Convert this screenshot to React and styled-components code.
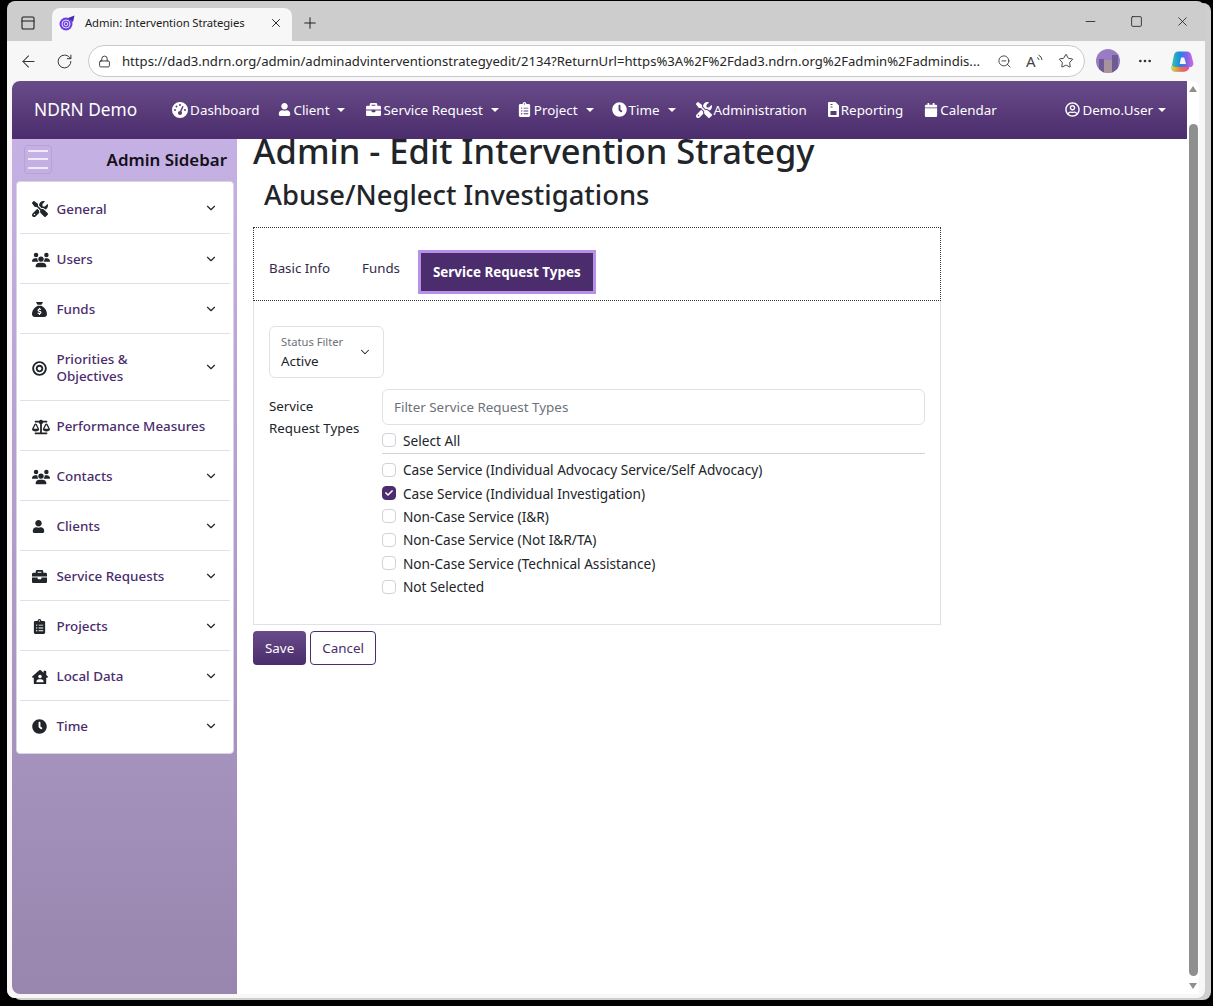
import React from 'react';
import styled, { createGlobalStyle } from 'styled-components';
import { ArrowLeft, RotateCw, Lock, ZoomOut, Star, MoreHorizontal, X, Plus, Minus, Square, ChevronDown, PanelTop } from 'lucide-react';
import { FaBullseye, FaBalanceScale, FaUser, FaBriefcase, FaClipboardList, FaHouseUser, FaClock, FaCalendar, FaRegUserCircle, FaCheck } from 'react-icons/fa';
import { FaSackDollar, FaUsers, FaScrewdriverWrench, FaGaugeHigh } from 'react-icons/fa6';

const Global = createGlobalStyle`
  html, body { margin: 0; height: 100%; background: #000; overflow: hidden; }
  * { box-sizing: border-box; }
  body { font-family: "Noto Sans", "Open Sans", sans-serif; color: #212529; }
`;

const Screen = styled.div`
  width: 1213px;
  height: 1006px;
  padding: 1px 8px 8px 7px;
`;

const Window = styled.div`
  height: 100%;
  background: #cdcdcd;
  border-radius: 8px;
  display: flex;
  flex-direction: column;
  box-shadow: 6px 2px 0 #cfcfcf;
`;

const TabStrip = styled.div`
  height: 40px;
  display: flex;
  align-items: flex-end;
  padding-left: 13px;
  color: #1c1c1c;
`;

const StripButton = styled.div`
  width: 19px;
  height: 33px;
  display: flex;
  align-items: center;
  margin-right: 13px;
  padding-bottom: 4px;
`;

const Tab = styled.div`
  width: 240px;
  height: 33px;
  background: #f7f7f7;
  border-radius: 8px 8px 0 0;
  display: flex;
  align-items: center;
  padding: 0 0 4px 7px;
  font-size: 11.3px;
  letter-spacing: -0.1px;
  gap: 10px;
  svg { flex: none; }
`;

const TabTitle = styled.span`
  flex: 1;
  white-space: nowrap;
`;

const TabClose = styled.span`
  display: flex;
  margin-right: 9px;
`;

const NewTab = styled.div`
  display: flex;
  height: 33px;
  align-items: center;
  margin-left: 9px;
  padding-bottom: 4px;
`;

const WindowControls = styled.div`
  margin-left: auto;
  height: 40px;
  display: flex;
  align-items: center;
  gap: 32px;
  padding: 0 15px 0 0;
`;

const Toolbar = styled.div`
  height: 40px;
  background: #f7f7f7;
  display: flex;
  align-items: center;
  padding-left: 12px;
  color: #333;
`;

const ToolIcon = styled.span`
  display: flex;
  margin-right: ${p => p.$gap || 0}px;
`;

const AddressBar = styled.div`
  width: 997px;
  height: 32px;
  border: 1px solid #c9c9c9;
  background: #fff;
  border-radius: 16px;
  display: flex;
  align-items: center;
  padding: 0 10px 0 9px;
  font-size: 13.13px;
  color: #262626;
`;

const Url = styled.span`
  flex: 1;
  margin-left: 11px;
  white-space: nowrap;
  overflow: hidden;
`;

const AddressIcons = styled.div`
  display: flex;
  align-items: center;
  gap: 14px;
`;

const ReadAloud = styled.span`
  width: 18px;
  display: flex;
  align-items: flex-start;
  font-size: 15px;
  line-height: 1;
  color: #444;
`;

const ToolbarRight = styled.div`
  display: flex;
  align-items: center;
  margin-left: 11px;
`;

const Viewport = styled.div`
  flex: 1;
  min-height: 0;
  display: flex;
  background: #f7f7f7;
  border-radius: 0 0 8px 8px;
  padding: 0 6px 4px 5px;
`;

const Page = styled.div`
  flex: 1;
  background: #fff;
  border-radius: 8px 8px 0 8px;
  display: flex;
  overflow: hidden;
  min-width: 0;
`;

const PageInner = styled.div`
  flex: 1;
  min-width: 0;
  display: flex;
  flex-direction: column;
`;

const Scrollbar = styled.div`
  width: 12px;
  background: #fff;
  display: flex;
  flex-direction: column;
  align-items: center;
  padding: 5px 0 5px;
`;

const ArrowUp = styled.div`
  width: 0;
  height: 0;
  border-left: 4px solid transparent;
  border-right: 4px solid transparent;
  border-bottom: 6px solid #8f8f8f;
`;

const ArrowDown = styled(ArrowUp)`
  border-bottom: 0;
  border-top: 6px solid #8f8f8f;
`;

const Thumb = styled.div`
  flex: 1;
  width: 9px;
  background: #8f8f8f;
  border-radius: 5px;
  margin: 32px 0 7px;
`;

const Navbar = styled.nav`
  height: 58px;
  flex: none;
  background: linear-gradient(#684c88, #4b2c6d);
  display: flex;
  align-items: center;
  padding: 0 21px 1px 22px;
  color: #fff;
  font-size: 13.4px;
  position: relative;
  z-index: 2;
`;

const Brand = styled.div`
  font-size: 17.3px;
  margin-right: 35px;
  white-space: nowrap;
`;

const NavItem = styled.div`
  display: flex;
  align-items: center;
  gap: 2px;
  margin-right: ${p => p.$gap}px;
  white-space: nowrap;
  svg { flex: none; }
`;

const Caret = styled.span`
  width: 0;
  height: 0;
  margin-left: ${p => p.$gap || 6}px;
  border-top: 4px solid #fff;
  border-left: 4px solid transparent;
  border-right: 4px solid transparent;
`;

const UserMenu = styled(NavItem)`
  margin: 0 0 0 auto;
`;

const Body = styled.div`
  flex: 1;
  min-height: 0;
  display: flex;
`;

const Sidebar = styled.aside`
  width: 225px;
  flex: none;
  background: linear-gradient(#c6b1e4, #9886ae);
  padding: 0 3px 0 4px;
`;

const SidebarHeader = styled.div`
  height: 42px;
  display: flex;
  align-items: center;
  justify-content: space-between;
  padding: 0 7px 2px 8px;
`;

const Hamburger = styled.div`
  width: 28px;
  height: 29px;
  border: 1px solid #b6a2d4;
  border-radius: 4px;
  display: flex;
  flex-direction: column;
  justify-content: center;
  gap: 6.5px;
  padding: 0 3px;
  span { height: 2px; background: #f0eaf8; }
`;

const SidebarTitle = styled.div`
  font-size: 16.9px;
  font-weight: 600;
  color: #14101a;
`;

const SidebarCard = styled.div`
  background: #fff;
  border-radius: 4px;
  border: 1px solid #d9d3e2;
  padding: 1px 3px 3px;
`;

const SideRow = styled.div`
  min-height: ${p => (p.$tall ? 67 : 50)}px;
  display: flex;
  align-items: center;
  padding: 2px 12px 0 12px;
  border-top: ${p => (p.$first ? 0 : '1px solid #e0e0e6')};
  color: #4b2c6d;
  font-size: 13.4px;
  font-weight: 500;
  line-height: 17px;
  svg.chevron { margin-top: -2px; }
`;

const SideIcon = styled.span`
  width: 24.5px;
  flex: none;
  display: flex;
  justify-content: flex-start;
  color: #212529;
`;

const SideLabel = styled.span`
  flex: 1;
`;

const Main = styled.main`
  flex: 1;
  min-width: 0;
  padding: 0 16px;
`;

const Title = styled.h1`
  margin: -11px 0 0;
  font-size: 34.45px;
  line-height: 45px;
  font-weight: 500;
  white-space: nowrap;
`;

const Subtitle = styled.h2`
  margin: 0 0 13px;
  padding: 2px 0 0 11px;
  font-size: 27.36px;
  line-height: 39px;
  font-weight: 500;
`;

const Panel = styled.section`
  width: 688px;
`;

const TabBar = styled.div`
  height: 74px;
  border: 1px dotted #333;
  display: flex;
  align-items: center;
  padding: 15px 0 0 15px;
  font-size: 13.3px;
`;

const TabLink = styled.div`
  color: #35294a;
  margin: -8px 32px 0 0;
`;

const ActiveTab = styled.div`
  height: 44px;
  margin-left: -14px;
  padding: 0 12px;
  display: flex;
  align-items: center;
  background: #4b2c6d;
  border: 3px solid #b890ea;
  color: #fff;
  font-size: 13.4px;
  font-weight: 700;
`;

const PanelBody = styled.div`
  height: 324px;
  border: 1px solid #dee2e6;
  border-top: 0;
  padding: 25px 15px 0;
`;

const FloatingSelect = styled.div`
  width: 115px;
  height: 52px;
  border: 1px solid #dee2e6;
  border-radius: 6px;
  padding: 7px 11px;
  position: relative;
`;

const FloatingLabel = styled.div`
  font-size: 11.2px;
  line-height: 16px;
  color: #6d7278;
`;

const FloatingValue = styled.div`
  font-size: 13.4px;
  line-height: 20px;
  margin-top: 1px;
`;

const SelectChevron = styled.span`
  position: absolute;
  right: 11px;
  top: 18px;
  display: flex;
`;

const Field = styled.div`
  display: flex;
  margin-top: 11px;
`;

const FieldLabel = styled.div`
  width: 113px;
  flex: none;
  font-size: 13.3px;
  line-height: 22px;
  padding-top: 6px;
`;

const FieldControl = styled.div`
  flex: 1;
`;

const FilterInput = styled.div`
  height: 36px;
  border: 1px solid #dee2e6;
  border-radius: 6px;
  display: flex;
  align-items: center;
  padding: 0 11px;
  font-size: 13.4px;
  color: #6d7278;
`;

const CheckRow = styled.label`
  display: flex;
  align-items: center;
  height: 23.4px;
  font-size: 13.65px;
  gap: 7px;
`;

const SelectAll = styled(CheckRow)`
  margin-top: 3px;
  height: 24px;
`;

const Rule = styled.div`
  height: 1px;
  background: #d4d4d4;
  margin: 1px 0 4px;
`;

const Box = styled.span`
  width: 14px;
  height: 14px;
  flex: none;
  border-radius: 4px;
  border: 1px solid ${p => (p.$on ? '#4b2c6d' : '#ced4da')};
  background: ${p => (p.$on ? '#4b2c6d' : '#fff')};
  color: #fff;
  display: flex;
  align-items: center;
  justify-content: center;
`;

const Actions = styled.div`
  display: flex;
  gap: 4px;
  margin-top: 6px;
`;

const SaveButton = styled.div`
  height: 34px;
  padding: 0 12px;
  display: flex;
  align-items: center;
  border-radius: 4px;
  font-size: 13.4px;
  color: #fff;
  background: linear-gradient(#684c88, #4b2c6d);
`;

const CancelButton = styled(SaveButton)`
  padding: 0 11px;
  color: #4b2c6d;
  background: #fff;
  border: 1px solid #4b2c6d;
`;

function ReportIcon() {
  return (
    <svg width="11" height="15" viewBox="0 0 11 15">
      <path
        fillRule="evenodd"
        fill="#fff"
        d="M1 0h6.5L11 3.5V14a1 1 0 0 1-1 1H1a1 1 0 0 1-1-1V1a1 1 0 0 1 1-1zM2.5 2v1h2V2zm0 2.500v1h2v-1zM2.5 9v4h6V9z"
      />
    </svg>
  );
}

const navItems = [
  { icon: <FaGaugeHigh size={16} />, label: 'Dashboard', gap: 19 },
  { icon: <FaUser size={13} />, label: 'Client', caret: true, gap: 21 },
  { icon: <FaBriefcase size={15} />, label: 'Service Request', caret: true, gap: 18 },
  { icon: <FaClipboardList size={15} />, label: 'Project', caret: true, gap: 18 },
  { icon: <FaClock size={15} />, label: 'Time', caret: true, gap: 20 },
  { icon: <FaScrewdriverWrench size={16} />, label: 'Administration', gap: 21 },
  { icon: <ReportIcon />, label: 'Reporting', gap: 21 },
  { icon: <FaCalendar size={14} />, label: 'Calendar', gap: 0 },
];

const sideItems = [
  { icon: <FaScrewdriverWrench size={16} />, label: 'General', more: true },
  { icon: <FaUsers size={18} />, label: 'Users', more: true },
  { icon: <FaSackDollar size={15} />, label: 'Funds', more: true },
  { icon: <FaBullseye size={15} />, label: <>Priorities &amp;<br />Objectives</>, more: true, tall: true },
  { icon: <FaBalanceScale size={18} />, label: 'Performance Measures' },
  { icon: <FaUsers size={18} />, label: 'Contacts', more: true },
  { icon: <FaUser size={13} />, label: 'Clients', more: true },
  { icon: <FaBriefcase size={15} />, label: 'Service Requests', more: true },
  { icon: <FaClipboardList size={15} />, label: 'Projects', more: true },
  { icon: <FaHouseUser size={16} />, label: 'Local Data', more: true },
  { icon: <FaClock size={15} />, label: 'Time', more: true },
];

const requestTypes = [
  { label: 'Case Service (Individual Advocacy Service/Self Advocacy)' },
  { label: 'Case Service (Individual Investigation)', on: true },
  { label: 'Non-Case Service (I&R)' },
  { label: 'Non-Case Service (Not I&R/TA)' },
  { label: 'Non-Case Service (Technical Assistance)' },
  { label: 'Not Selected' },
];

function Favicon() {
  return (
    <svg width="16" height="16" viewBox="0 0 16 16">
      <circle cx="7" cy="9" r="6.5" fill="#6d3fe0" />
      <circle cx="7" cy="9" r="4" fill="none" stroke="#e6dcff" strokeWidth="1" />
      <circle cx="7" cy="9" r="1.8" fill="none" stroke="#e6dcff" strokeWidth="1" />
      <path d="M9 3 L15.5 0.5 L14 7 Z" fill="#4a2aa8" />
    </svg>
  );
}

function Avatar() {
  return (
    <svg width="24" height="24" viewBox="0 0 24 24">
      <clipPath id="avatar-clip"><circle cx="12" cy="12" r="12" /></clipPath>
      <g clipPath="url(#avatar-clip)">
        <rect width="24" height="24" fill="#9a7cc4" />
        <rect x="3" y="10" width="5" height="14" fill="#6f5b94" />
        <rect x="16" y="6" width="6" height="18" fill="#6f5b94" />
        <rect x="8" y="11" width="8" height="13" fill="#a8929c" />
      </g>
    </svg>
  );
}

function ReadWaves() {
  return (
    <svg width="7" height="9" viewBox="0 0 7 9" fill="none" stroke="#444" strokeWidth="1">
      <path d="M1 3.5a3 3 0 0 1 2 2.5M2.5 1a6 6 0 0 1 3.5 5" />
    </svg>
  );
}

function CopilotLogo() {
  return (
    <svg width="23" height="23" viewBox="0 0 23 23">
      <defs>
        <linearGradient id="cop-a" x1="0" y1="0" x2="1" y2="0">
          <stop offset="0" stopColor="#35c9a0" />
          <stop offset="0.4" stopColor="#1f86e8" />
          <stop offset="0.7" stopColor="#7d62ec" />
          <stop offset="1" stopColor="#d86ae0" />
        </linearGradient>
        <linearGradient id="cop-c" x1="0" y1="0" x2="1" y2="0">
          <stop offset="0" stopColor="#e8d23a" />
          <stop offset="0.5" stopColor="#f2713a" />
          <stop offset="1" stopColor="#e84a9a" />
        </linearGradient>
      </defs>
      <path d="M7 1.5h9c2.2 0 3.7 1.2 4.3 3.5l2 7.5c.6 2.5-1 4.5-3 4.5h-2c-.7 2.6-2.3 4.5-4.8 4.5H4c-2.5 0-4-2-3.4-4.5L3 5c.5-2 2-3.5 4-3.5z" fill="url(#cop-a)" />
      <path d="M1 15.5c1 .8 2.5 1.5 4 1.5h13.5c-.7 2.8-2.3 4.5-5 4.5H4c-2.5 0-3.7-3.5-3-6z" fill="url(#cop-c)" />
      <path d="M10 7.5h3.2l1.8 6.5h-6.3z" fill="#f7f7f7" />
    </svg>
  );
}

export default function App() {
  return (
    <Screen>
      <Global />
      <Window>
        <TabStrip>
          <StripButton><PanelTop size={16} strokeWidth={1.6} /></StripButton>
          <Tab>
            <Favicon />
            <TabTitle>Admin: Intervention Strategies</TabTitle>
            <TabClose><X size={14} strokeWidth={1.6} /></TabClose>
          </Tab>
          <NewTab><Plus size={18} strokeWidth={1.3} /></NewTab>
          <WindowControls>
            <Minus size={15} strokeWidth={1.3} />
            <Square size={13} strokeWidth={1.5} />
            <X size={15} strokeWidth={1.3} />
          </WindowControls>
        </TabStrip>
        <Toolbar>
          <ToolIcon $gap={18}><ArrowLeft size={19} strokeWidth={1.3} /></ToolIcon>
          <ToolIcon $gap={15}><RotateCw size={17} strokeWidth={1.4} /></ToolIcon>
          <AddressBar>
            <Lock size={13} strokeWidth={1.6} />
            <Url>https://dad3.ndrn.org/admin/adminadvinterventionstrategyedit/2134?ReturnUrl=https%3A%2F%2Fdad3.ndrn.org%2Fadmin%2Fadmindis...</Url>
            <AddressIcons>
              <ZoomOut size={15} strokeWidth={1.3} />
              <ReadAloud>A<ReadWaves /></ReadAloud>
              <Star size={16} strokeWidth={1.3} />
            </AddressIcons>
          </AddressBar>
          <ToolbarRight>
            <ToolIcon $gap={17}><Avatar /></ToolIcon>
            <ToolIcon $gap={18}><MoreHorizontal size={16} strokeWidth={2} /></ToolIcon>
            <CopilotLogo />
          </ToolbarRight>
        </Toolbar>
        <Viewport>
          <Page>
            <PageInner>
              <Navbar>
                <Brand>NDRN Demo</Brand>
                {navItems.map(item => (
                  <NavItem key={item.label} $gap={item.gap}>
                    {item.icon}
                    {item.label}
                    {item.caret && <Caret />}
                  </NavItem>
                ))}
                <UserMenu>
                  <FaRegUserCircle size={15} />
                  Demo.User
                  <Caret $gap={3} />
                </UserMenu>
              </Navbar>
              <Body>
                <Sidebar>
                  <SidebarHeader>
                    <Hamburger><span /><span /><span /></Hamburger>
                    <SidebarTitle>Admin Sidebar</SidebarTitle>
                  </SidebarHeader>
                  <SidebarCard>
                    {sideItems.map((item, i) => (
                      <SideRow key={i} $first={i === 0} $tall={item.tall}>
                        <SideIcon>{item.icon}</SideIcon>
                        <SideLabel>{item.label}</SideLabel>
                        {item.more && <ChevronDown className="chevron" size={14} strokeWidth={2} color="#212529" />}
                      </SideRow>
                    ))}
                  </SidebarCard>
                </Sidebar>
                <Main>
                  <Title>Admin - Edit Intervention Strategy</Title>
                  <Subtitle>Abuse/Neglect Investigations</Subtitle>
                  <Panel>
                    <TabBar>
                      <TabLink>Basic Info</TabLink>
                      <TabLink>Funds</TabLink>
                      <ActiveTab>Service Request Types</ActiveTab>
                    </TabBar>
                    <PanelBody>
                      <FloatingSelect>
                        <FloatingLabel>Status Filter</FloatingLabel>
                        <FloatingValue>Active</FloatingValue>
                        <SelectChevron><ChevronDown size={14} strokeWidth={1.8} /></SelectChevron>
                      </FloatingSelect>
                      <Field>
                        <FieldLabel>Service<br />Request Types</FieldLabel>
                        <FieldControl>
                          <FilterInput>Filter Service Request Types</FilterInput>
                          <SelectAll><Box />Select All</SelectAll>
                          <Rule />
                          {requestTypes.map(t => (
                            <CheckRow key={t.label}>
                              <Box $on={t.on}>{t.on && <FaCheck size={8} />}</Box>
                              {t.label}
                            </CheckRow>
                          ))}
                        </FieldControl>
                      </Field>
                    </PanelBody>
                    <Actions>
                      <SaveButton>Save</SaveButton>
                      <CancelButton>Cancel</CancelButton>
                    </Actions>
                  </Panel>
                </Main>
              </Body>
            </PageInner>
            <Scrollbar>
              <ArrowUp />
              <Thumb />
              <ArrowDown />
            </Scrollbar>
          </Page>
        </Viewport>
      </Window>
    </Screen>
  );
}
